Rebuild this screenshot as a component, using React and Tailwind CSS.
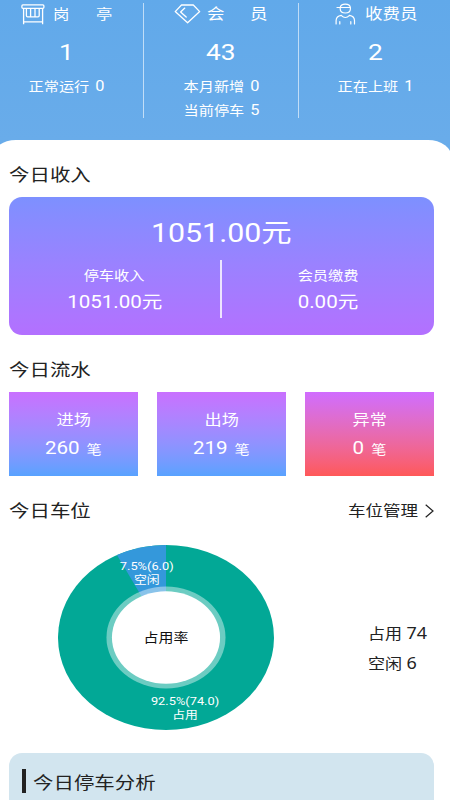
import clsx from "clsx";

const FLOWS = [
	{ label: "进场", count: 260, danger: false },
	{ label: "出场", count: 219, danger: false },
	{ label: "异常", count: 0, danger: true },
];

// Horizontally widened text
function Wide({ className, origin = "origin-center", children }) {
	return (
		<span
			className={clsx(
				"inline-block scale-x-[1.168] whitespace-pre",
				origin,
				className
			)}>
			{children}
		</span>
	);
}

function BoothIcon() {
	return (
		<svg
			width="24"
			height="21"
			viewBox="0 0 24 21"
			fill="none"
			stroke="currentColor"
			strokeWidth="1.3">
			<rect x="0.9" y="0.9" width="22" height="3.4" rx="1" />
			<path d="M2.6 4.3V20.2M21.6 4.3V20.2M2.6 17.9H21.6" />
			<path d="M5.4 4.3V11.6Q5.4 12.8 6.6 12.8H17Q18.2 12.8 18.2 11.6V4.3M9.6 4.3V12.8M14 4.3V12.8" />
		</svg>
	);
}

function DiamondIcon() {
	return (
		<svg
			width="27"
			height="20"
			viewBox="0 0 27 20"
			fill="none"
			stroke="currentColor"
			strokeWidth="1.3"
			strokeLinejoin="round"
			strokeLinecap="round">
			<path d="M7.5 1H19.3L25.7 7.6L13.6 18.7L1.2 7.6Z" />
			<path d="M10.8 4.1L6.6 7.9L12.2 13.1" />
		</svg>
	);
}

function CollectorIcon() {
	return (
		<svg
			width="21"
			height="22"
			viewBox="0 0 21 22"
			fill="none"
			stroke="currentColor"
			strokeWidth="1.2"
			strokeLinecap="round">
			<path d="M2 4.5H15.3M5.2 4.5C5.8 -0.1 14.8 -0.1 15.4 4.5V6C15.2 11.3 5.4 11.3 5.2 6Z" />
			<path d="M1.1 21V17.5Q1.3 13.2 6.2 12.4Q10.4 16.6 14.5 12.4Q19.3 13.2 19.5 17.5V21" />
			<path d="M4.8 18.7V21M15.8 18.7V21" />
		</svg>
	);
}

function Stat({ value, lines }) {
	return (
		<>
			<div className="h-[46px] pt-px text-[22.5px] leading-[46px] text-center">
				<Wide>{value}</Wide>
			</div>
			{lines.map((line) => (
				<div
					key={line.label}
					className="h-6 text-[13px] leading-6 text-center">
					<Wide>
						{line.label}
						<span className="ml-[5px] text-[14px]">
							{line.count}
						</span>
					</Wide>
				</div>
			))}
		</>
	);
}

function SectionTitle({ children }) {
	return (
		<h2 className="text-[17.5px] leading-6 text-[#222]">
			<Wide origin="origin-left">{children}</Wide>
		</h2>
	);
}

function OccupancyChart() {
	return (
		<svg
			width="216"
			height="185"
			viewBox="0 0 185 185"
			preserveAspectRatio="none"
			textAnchor="middle">
			<circle cx="92.5" cy="92.5" r="92.5" fill="#02a896" />
			<path
				d="M92.5 92.5V0A92.5 92.5 0 0 0 50.5 10.1Z"
				fill="#3498db"
			/>
			<circle cx="92.5" cy="92.5" r="51" fill="#fff" fillOpacity="0.42" />
			<circle cx="92.5" cy="92.5" r="46.3" fill="#fff" />
			<g fill="#fff" fontSize="11">
				<text x="76" y="25.5">
					7.5%(6.0)
				</text>
				<text x="76" y="39.5">
					空闲
				</text>
				<text x="108.8" y="160.5">
					92.5%(74.0)
				</text>
				<text x="108.8" y="174.5">
					占用
				</text>
			</g>
			<text x="92.5" y="97.2" fontSize="12.8" fill="#111">
				占用率
			</text>
		</svg>
	);
}

export default function App() {
	return (
		<div className="h-[800px] w-[450px] overflow-hidden bg-[linear-gradient(#61a9ea,#69acea_140px)] font-[Roboto,'Noto_Sans_CJK_SC',sans-serif] font-normal">
			{/* Header stats */}
			<div className="flex h-[140px] text-white">
				<div className="w-[143px] pr-[11px]">
					<div className="flex h-7 items-center pl-[21px] text-[14px]">
						<BoothIcon />
						<Wide origin="origin-left" className="ml-2">
							岗
						</Wide>
						<Wide origin="origin-left" className="ml-[29px]">
							亭
						</Wide>
					</div>
					<Stat
						value="1"
						lines={[{ label: "正常运行", count: 0 }]}
					/>
				</div>
				<div className="mt-[3px] h-[115px] w-px bg-white/60" />
				<div className="-mx-px w-[156px]">
					<div className="flex h-7 items-center pl-[31px] text-[15px]">
						<DiamondIcon />
						<Wide origin="origin-left" className="ml-[6px]">
							会
						</Wide>
						<Wide origin="origin-left" className="ml-[28px]">
							员
						</Wide>
					</div>
					<Stat
						value="43"
						lines={[
							{ label: "本月新增", count: 0 },
							{ label: "当前停车", count: 5 },
						]}
					/>
				</div>
				<div className="mt-[3px] h-[115px] w-px bg-white/60" />
				<div className="flex-1 pl-px">
					<div className="flex h-7 items-center pl-[35px] text-[15px]">
						<CollectorIcon />
						<Wide origin="origin-left" className="ml-[9px]">
							收费员
						</Wide>
					</div>
					<Stat
						value="2"
						lines={[{ label: "正在上班", count: 1 }]}
					/>
				</div>
			</div>

			<div className="-ml-2 h-[660px] w-[460px] rounded-t-[24px_18px] bg-white pt-[23px] pr-[18px] pl-[17px]">
				<SectionTitle>今日收入</SectionTitle>

				{/* Income */}
				<div className="mt-[10px] h-[138px] w-[425px] rounded-[13px] bg-gradient-to-b from-[#7d90ff] to-[#b370ff] pt-[18px] text-white">
					<div className="h-9 text-center text-[26px] leading-9">
						<Wide>1051.00元</Wide>
					</div>
					<div className="mt-[9px] flex h-[58px] text-center">
						<div className="w-[211px] pt-1">
							<div className="text-[13px] leading-6">
								<Wide>停车收入</Wide>
							</div>
							<div className="text-[17.6px] leading-7">
								<Wide>1051.00元</Wide>
							</div>
						</div>
						<div className="w-0.5 bg-white/80" />
						<div className="flex-1 pt-1">
							<div className="text-[13px] leading-6">
								<Wide>会员缴费</Wide>
							</div>
							<div className="text-[17.6px] leading-7">
								<Wide>0.00元</Wide>
							</div>
						</div>
					</div>
				</div>

				<div className="mt-[23px]">
					<SectionTitle>今日流水</SectionTitle>
				</div>

				{/* Flow */}
				<div className="mt-[10px] flex gap-[19px]">
					{FLOWS.map((flow) => (
						<div
							key={flow.label}
							className={clsx(
								"h-[84px] w-[129px] bg-gradient-to-b pt-4 text-center text-white",
								flow.danger
									? "from-[#d06cff] to-[#ff5858]"
									: "from-[#c970ff] to-[#58a2ff]"
							)}>
							<div className="text-[14.7px] leading-6">
								<Wide>{flow.label}</Wide>
							</div>
							<div className="mt-[2px] text-[17.6px] leading-7">
								<Wide>
									{flow.count}
									<span className="ml-[6px] text-[13px]">
										笔
									</span>
								</Wide>
							</div>
						</div>
					))}
				</div>

				{/* Parking spaces */}
				<div className="mt-[23px] flex w-[425px] items-center justify-between">
					<SectionTitle>今日车位</SectionTitle>
					<div className="flex items-center gap-[7px] text-[15px] leading-6 text-[#222]">
						<Wide origin="origin-right">车位管理</Wide>
						<svg
							width="9"
							height="14"
							viewBox="0 0 9 14"
							fill="none"
							stroke="currentColor"
							strokeWidth="1.2">
							<path d="M0.7 0.8L8 7L0.7 13.2" />
						</svg>
					</div>
				</div>

				<div className="mt-[22px] flex h-[185px] pl-[48.5px]">
					<OccupancyChart />
					<div className="ml-[94px] pt-[73px] font-['Noto_Sans','Noto_Sans_CJK_SC',sans-serif] text-[14.6px] leading-[30px] text-[#222]">
						<div className="h-[30px]">
							<Wide origin="origin-left">
								占用 <span className="text-[15.4px]">74</span>
							</Wide>
						</div>
						<div className="h-[30px]">
							<Wide origin="origin-left">
								空闲 <span className="text-[15.4px]">6</span>
							</Wide>
						</div>
					</div>
				</div>

				{/* Analysis */}
				<div className="mt-[23px] flex h-[60px] w-[425px] gap-[7px] rounded-t-[13px] bg-[#d2e5ef] pt-4 pl-[13px]">
					<div className="h-6 w-1 bg-[#222]" />
					<div className="pt-[2px]">
						<SectionTitle>今日停车分析</SectionTitle>
					</div>
				</div>
			</div>
		</div>
	);
}
